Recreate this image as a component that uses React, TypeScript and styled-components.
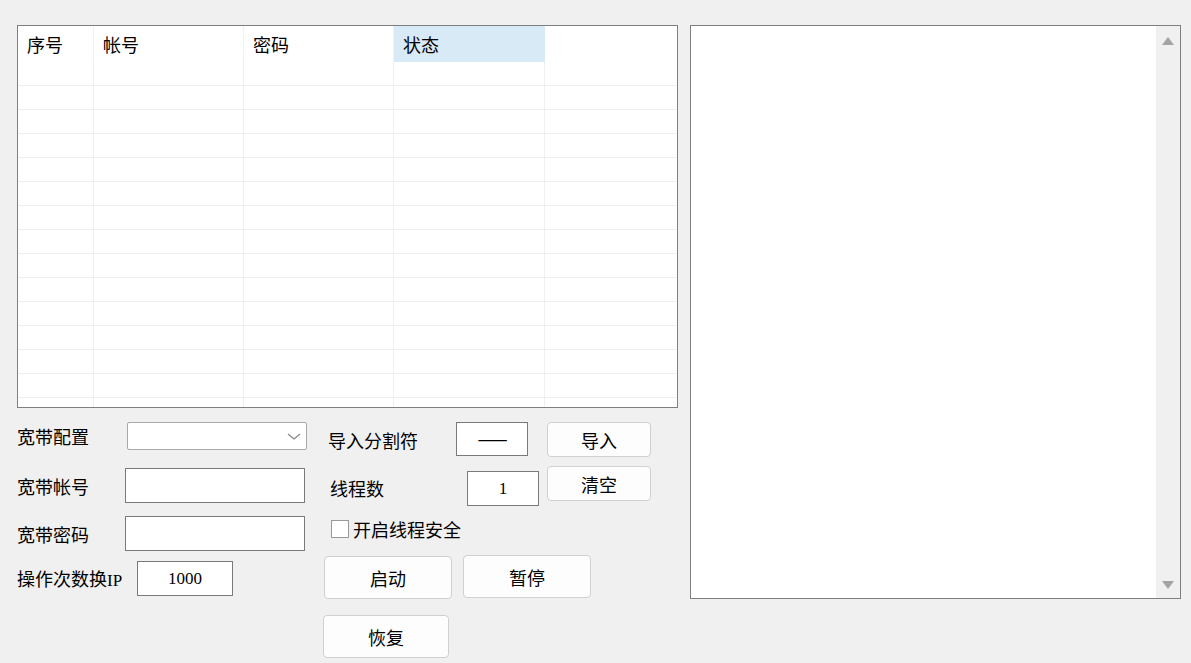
import React from 'react'
import styled, { createGlobalStyle } from 'styled-components'

const GlobalStyle = createGlobalStyle`
  html, body {
    margin: 0;
    padding: 0;
    background: #f0f0f0;
  }
  body {
    font-family: 'Noto Sans CJK SC', 'Noto Sans', sans-serif;
    font-size: 18px;
    color: #000;
  }
  * {
    box-sizing: border-box;
  }
`

const Window = styled.div`
  display: flex;
  gap: 12px;
  height: 663px;
  padding: 25px 0 0 17px;
  overflow: hidden;
`

const LeftColumn = styled.div`
  display: flex;
  flex-direction: column;
  width: 661px;
`

const Table = styled.div`
  background: #fff;
  border: 1px solid #7f7f7f;
  height: 383px;
  overflow: hidden;
`

const columns = '76px 150px 150px 151px 1fr'

const HeaderRow = styled.div`
  display: grid;
  grid-template-columns: ${columns};
  height: 36px;
`

const HeaderCell = styled.div<{ $active?: boolean }>`
  align-items: center;
  background: ${(p) => (p.$active ? '#d9eaf7' : '#fff')};
  border-right: 1px solid ${(p) => (p.$active ? '#d9eaf7' : '#f2f2f2')};
  display: flex;
  padding-left: 9px;
  line-height: 1;
  &:last-child {
    border-right: none;
  }
`

const BodyRow = styled.div`
  border-bottom: 1px solid #efefef;
  display: grid;
  grid-template-columns: ${columns};
  height: 24px;
`

const BodyCell = styled.div`
  border-right: 1px solid #efefef;
  &:last-child {
    border-right: none;
  }
`

const FormArea = styled.div`
  display: flex;
  padding-top: 14px;
`

const LeftForm = styled.div`
  display: flex;
  flex-direction: column;
  width: 306px;
`

const FieldRow = styled.div<{ $top: number; $labelWidth: number }>`
  align-items: center;
  display: flex;
  margin-top: ${(p) => p.$top}px;

  & > span {
    width: ${(p) => p.$labelWidth}px;
    flex: none;
    line-height: 1;
  }
`

const Label = styled.span`
  white-space: nowrap;
`

const Latin = styled.span`
  font-family: 'Liberation Serif', serif;
  font-size: 17px;
`

const Select = styled.div`
  align-items: center;
  background: #fff;
  border: 1px solid #a9a9a9;
  border-radius: 2px;
  display: flex;
  height: 28px;
  justify-content: flex-end;
  padding-right: 5px;
  width: 180px;
`

const TextBox = styled.div<{ $width: number; $height?: number; $top?: number }>`
  align-items: center;
  background: #fff;
  border: 1px solid #7a7a7a;
  display: flex;
  font-family: 'Liberation Serif', serif;
  font-size: 17px;
  height: ${(p) => p.$height ?? 35}px;
  justify-content: center;
  margin-top: ${(p) => p.$top ?? 0}px;
  width: ${(p) => p.$width}px;
`

const Dash = styled.span`
  font-family: 'Noto Sans CJK SC', sans-serif;
  font-size: 18px;
  letter-spacing: -1px;
  margin-top: -2px;
`

const MidForm = styled.div`
  display: flex;
  flex-direction: column;
`

const MidRow = styled.div<{ $top: number }>`
  align-items: flex-start;
  display: flex;
  margin-top: ${(p) => p.$top}px;
`

const MidLabel = styled.span<{ $left: number; $width: number; $top: number }>`
  flex: none;
  line-height: 1;
  margin-left: ${(p) => p.$left}px;
  margin-top: ${(p) => p.$top}px;
  width: ${(p) => p.$width}px;
`

const Button = styled.button<{ $width: number; $height: number; $top?: number; $left?: number }>`
  background: #fdfdfd;
  border: 1px solid #d0d0d0;
  border-radius: 4px;
  color: #000;
  font-family: 'Noto Sans CJK SC', sans-serif;
  font-size: 18px;
  height: ${(p) => p.$height}px;
  line-height: 1;
  margin-left: ${(p) => p.$left ?? 0}px;
  margin-top: ${(p) => p.$top ?? 0}px;
  padding: 0;
  width: ${(p) => p.$width}px;
`

const CheckRow = styled.label`
  align-items: center;
  display: flex;
  gap: 4px;
  line-height: 1;
  margin-left: 8px;
  margin-top: 14px;
`

const CheckBox = styled.span`
  background: #fff;
  border: 1px solid #999;
  display: block;
  height: 18px;
  width: 18px;
`

const LogPanel = styled.div`
  background: #fff;
  border: 1px solid #7f7f7f;
  display: flex;
  height: 574px;
  justify-content: flex-end;
  width: 491px;
`

const ScrollBar = styled.div`
  align-items: center;
  background: #f0f0f0;
  display: flex;
  flex-direction: column;
  justify-content: space-between;
  padding: 11px 0 9px;
  width: 24px;
`

const Arrow = ({ down }: { down?: boolean }) => (
  <svg width="12" height="8" viewBox="0 0 12 8">
    <polygon points={down ? '0,0 12,0 6,8' : '6,0 12,8 0,8'} fill="#a3a3a3" />
  </svg>
)

const Chevron = () => (
  <svg width="14" height="7" viewBox="0 0 14 7">
    <polyline points="1,1 7,6 13,1" fill="none" stroke="#888" strokeWidth="1.2" />
  </svg>
)

const headers = ['序号', '帐号', '密码', '状态', '']
const rows = Array.from(new Array(15), (x, i) => i)

function App() {
  return (
    <>
      <GlobalStyle />
      <Window>
        <LeftColumn>
          <Table>
            <HeaderRow>
              {headers.map((h, i) => (
                <HeaderCell key={i} $active={h === '状态'}>
                  {h}
                </HeaderCell>
              ))}
            </HeaderRow>
            {rows.map((r) => (
              <BodyRow key={r}>
                {headers.map((h, i) => (
                  <BodyCell key={i} />
                ))}
              </BodyRow>
            ))}
          </Table>

          <FormArea>
            <LeftForm>
              <FieldRow $top={0} $labelWidth={110}>
                <Label>宽带配置</Label>
                <Select>
                  <Chevron />
                </Select>
              </FieldRow>
              <FieldRow $top={18} $labelWidth={108}>
                <Label>宽带帐号</Label>
                <TextBox $width={180} />
              </FieldRow>
              <FieldRow $top={13} $labelWidth={108}>
                <Label>宽带密码</Label>
                <TextBox $width={180} />
              </FieldRow>
              <FieldRow $top={10} $labelWidth={120}>
                <Label>
                  操作次数换<Latin>IP</Latin>
                </Label>
                <TextBox $width={96}>1000</TextBox>
              </FieldRow>
            </LeftForm>

            <MidForm>
              <MidRow $top={0}>
                <MidLabel $left={5} $width={128} $top={9}>
                  导入分割符
                </MidLabel>
                <TextBox $width={72} $height={34}>
                  <Dash>——</Dash>
                </TextBox>
                <Button $width={104} $height={35} $left={19}>
                  导入
                </Button>
              </MidRow>
              <MidRow $top={9}>
                <MidLabel $left={7} $width={137} $top={13}>
                  线程数
                </MidLabel>
                <TextBox $width={72} $top={5}>
                  1
                </TextBox>
                <Button $width={104} $height={35} $left={8}>
                  清空
                </Button>
              </MidRow>
              <CheckRow>
                <CheckBox />
                开启线程安全
              </CheckRow>
              <MidRow $top={17}>
                <Button $width={128} $height={43} $left={1} $top={1}>
                  启动
                </Button>
                <Button $width={128} $height={43} $left={11}>
                  暂停
                </Button>
              </MidRow>
              <MidRow $top={16}>
                <Button $width={126} $height={43}>
                  恢复
                </Button>
              </MidRow>
            </MidForm>
          </FormArea>
        </LeftColumn>

        <LogPanel>
          <ScrollBar>
            <Arrow />
            <Arrow down />
          </ScrollBar>
        </LogPanel>
      </Window>
    </>
  )
}

export default App
